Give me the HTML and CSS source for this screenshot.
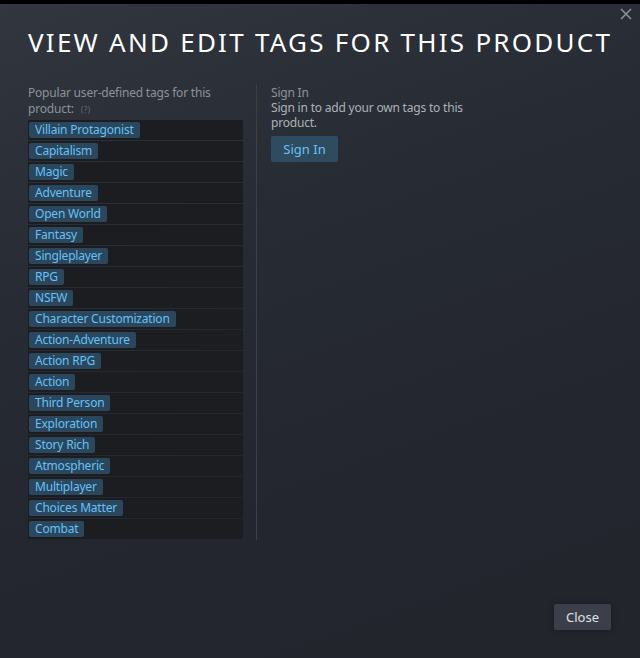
FILE: index.html
```html
<!DOCTYPE html>
<html>
<head>
<meta charset="utf-8">
<link rel="stylesheet" href="styles.css">
</head>
<body>
<div class="modal">
  <button class="close-x" aria-label="Close">
    <svg width="12" height="12" viewBox="0 0 12 12"><path d="M1 1 L11 11 M11 1 L1 11" stroke="#8b919a" stroke-width="1.6" fill="none"/></svg>
  </button>
  <h1 class="title">View and edit tags for this product</h1>
  <div class="content">
    <div class="left">
      <div class="label">Popular user-defined tags for this product: <span class="help">(?)</span></div>
      <div class="tags">
        <div class="row"><span class="tag">Villain Protagonist</span></div>
        <div class="row"><span class="tag">Capitalism</span></div>
        <div class="row"><span class="tag">Magic</span></div>
        <div class="row"><span class="tag">Adventure</span></div>
        <div class="row"><span class="tag">Open World</span></div>
        <div class="row"><span class="tag">Fantasy</span></div>
        <div class="row"><span class="tag">Singleplayer</span></div>
        <div class="row"><span class="tag">RPG</span></div>
        <div class="row"><span class="tag">NSFW</span></div>
        <div class="row"><span class="tag">Character Customization</span></div>
        <div class="row"><span class="tag">Action-Adventure</span></div>
        <div class="row"><span class="tag">Action RPG</span></div>
        <div class="row"><span class="tag">Action</span></div>
        <div class="row"><span class="tag">Third Person</span></div>
        <div class="row"><span class="tag">Exploration</span></div>
        <div class="row"><span class="tag">Story Rich</span></div>
        <div class="row"><span class="tag">Atmospheric</span></div>
        <div class="row"><span class="tag">Multiplayer</span></div>
        <div class="row"><span class="tag">Choices Matter</span></div>
        <div class="row"><span class="tag">Combat</span></div>
      </div>
    </div>
    <div class="divider"></div>
    <div class="right">
      <div class="signin-head">Sign In</div>
      <div class="signin-text">Sign in to add your own tags to this product.</div>
      <button class="signin-btn">Sign In</button>
    </div>
  </div>
  <div class="footer">
    <button class="close-btn">Close</button>
  </div>
</div>
</body>
</html>
```
FILE: styles.css
```css
* { box-sizing: border-box; }
html, body { margin: 0; padding: 0; }
body {
  width: 640px;
  height: 658px;
  overflow: hidden;
  background: #000;
  font-family: "Noto Sans", "Open Sans", sans-serif;
}
.modal {
  position: relative;
  height: 658px;
  padding-top: 4px;
  background: #000;
}
.modal::before {
  content: "";
  position: absolute;
  left: 0; right: 0; top: 4px; bottom: 0;
  background: linear-gradient(160deg, #31363f 0%, #272b33 35%, #23262e 70%, #22252c 100%);
  z-index: 0;
}
.modal > * { position: relative; z-index: 1; }
.close-x {
  position: absolute;
  top: 8px;
  right: 8px;
  width: 12px;
  height: 12px;
  padding: 0;
  border: 0;
  background: none;
  display: block;
}
.close-x svg { display: block; }
.title {
  margin: 22px 0 0 28px;
  font-weight: 400;
  font-size: 26px;
  line-height: 32px;
  letter-spacing: 2.25px;
  text-transform: uppercase;
  color: #ffffff;
  white-space: nowrap;
}
.content {
  display: flex;
  margin: 27px 0 0 28px;
}
.left {
  width: 215px;
}
.label {
  font-size: 12px;
  letter-spacing: -0.2px;
  line-height: 16px;
  color: #8b929a;
  margin-bottom: 2px;
}
.help {
  font-size: 9px;
  letter-spacing: 0;
  color: #5c6470;
  margin-left: 4px;
}
.tags {
  display: flex;
  flex-direction: column;
  gap: 1px;
}
.row {
  height: 20px;
  background: #1c1d21;
  padding: 2px 1px;
  display: flex;
  align-items: center;
}
.tag {
  display: inline-block;
  height: 16px;
  line-height: 16px;
  padding: 0 6px;
  background: #2a475e;
  color: #67c1f5;
  font-size: 12px;
  letter-spacing: -0.2px;
  border-radius: 2px;
}
.divider {
  width: 1px;
  background: #3a3f48;
  margin-left: 13px;
  margin-right: 14px;
  height: 455px;
}
.right {
  width: 220px;
}
.signin-head {
  font-size: 12px;
  letter-spacing: -0.2px;
  line-height: 15px;
  color: #8b929a;
}
.signin-text {
  font-size: 12px;
  letter-spacing: -0.2px;
  line-height: 15px;
  color: #acb2b8;
}
.signin-btn {
  margin-top: 6px;
  width: 67px;
  height: 26px;
  padding: 0;
  border: 0;
  border-radius: 2px;
  background: #2f4b5f;
  color: #67c1f5;
  font-family: "Noto Sans", "Open Sans", sans-serif;
  font-size: 13px;
}
.footer {
  display: flex;
  justify-content: flex-end;
  padding-right: 29px;
  margin-top: 64px;
}
.close-btn {
  width: 57px;
  height: 26px;
  padding: 0;
  border: 0;
  border-radius: 2px;
  background: #3a3f4a;
  color: #dfe3e6;
  font-family: "Noto Sans", "Open Sans", sans-serif;
  font-size: 13px;
  box-shadow: 0 0 6px rgba(0,0,0,0.3);
}
```
